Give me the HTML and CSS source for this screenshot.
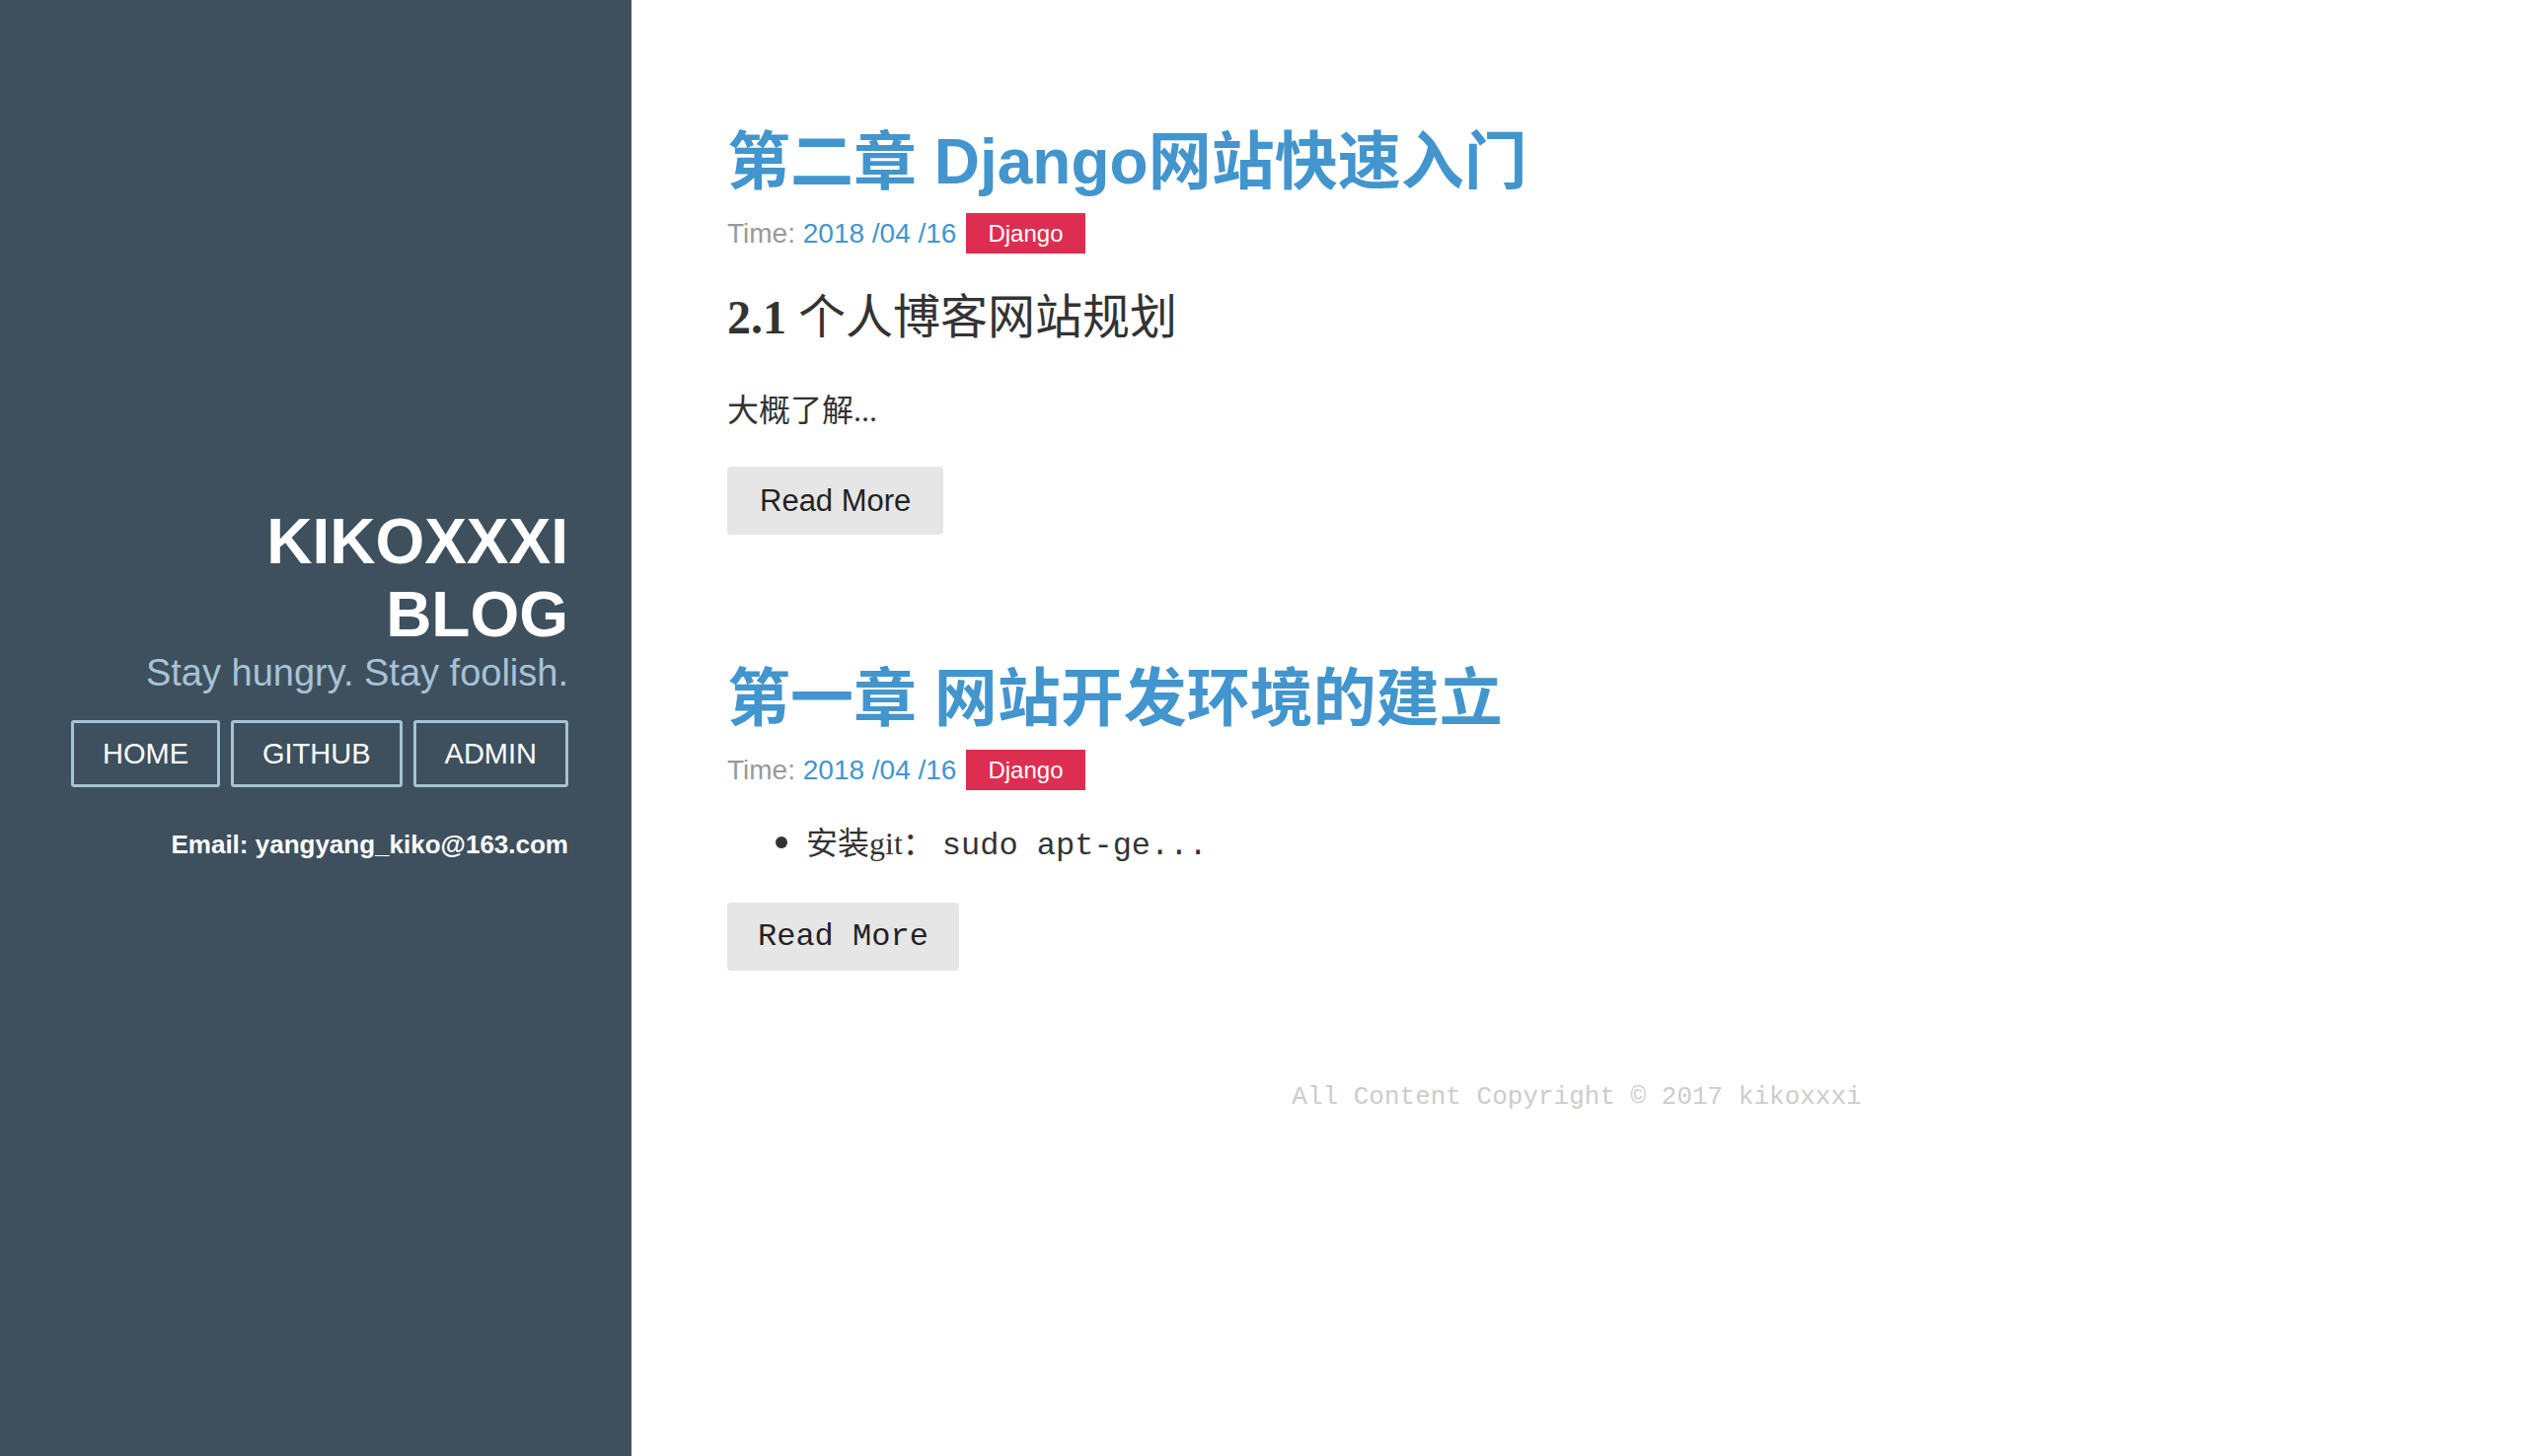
FILE: index.html
```html
<!DOCTYPE html>
<html lang="zh-CN">
<head>
<meta charset="utf-8">
<title>KIKOXXXI BLOG</title>
<link rel="stylesheet" href="styles.css">
</head>
<body>
<div class="layout">
  <aside class="sidebar">
    <h1 class="site-title">KIKOXXXI<br>BLOG</h1>
    <p class="tagline">Stay hungry. Stay foolish.</p>
    <nav class="nav">
      <a class="nav-link" href="#">HOME</a>
      <a class="nav-link" href="#">GITHUB</a>
      <a class="nav-link" href="#">ADMIN</a>
    </nav>
    <p class="email">Email: yangyang_kiko@163.com</p>
  </aside>
  <main class="main">
    <div class="posts">
      <article class="post">
        <h2 class="post-title"><a href="#">第二章 Django网站快速入门</a></h2>
        <div class="meta">
          <span class="time"><span class="time-label">Time:</span> <a class="date" href="#">2018 /04 /16</a></span>
          <a class="tag" href="#">Django</a>
        </div>
        <h3 class="excerpt-heading"><span class="num">2.1</span> 个人博客网站规划</h3>
        <p class="excerpt-text">大概了解...</p>
        <a class="read-more" href="#">Read More</a>
      </article>
      <article class="post">
        <h2 class="post-title"><a href="#">第一章 网站开发环境的建立</a></h2>
        <div class="meta">
          <span class="time"><span class="time-label">Time:</span> <a class="date" href="#">2018 /04 /16</a></span>
          <a class="tag" href="#">Django</a>
        </div>
        <ul class="excerpt-list">
          <li>安装git： <code>sudo apt-ge...</code></li>
        </ul>
        <a class="read-more read-more-mono" href="#">Read More</a>
      </article>
    </div>
    <footer class="footer">All Content Copyright © 2017 kikoxxxi</footer>
  </main>
</div>
</body>
</html>
```

FILE: styles.css
```css
html, body {
  margin: 0;
  padding: 0;
}

body {
  font-family: "Liberation Sans", "Noto Sans CJK SC", sans-serif;
  background: #ffffff;
  color: #333333;
}

.layout {
  display: flex;
  min-height: 100vh;
}

/* Sidebar */
.sidebar {
  width: 640px;
  flex-shrink: 0;
  box-sizing: border-box;
  background: #3e505e;
  padding: 512px 64px 0 60px;
  text-align: right;
  color: #ffffff;
}

.site-title {
  margin: 0;
  font-size: 64px;
  line-height: 74px;
  font-weight: 700;
}

.tagline {
  margin: 0;
  font-size: 38px;
  line-height: 44px;
  color: #a7c2d4;
}

.nav {
  display: flex;
  justify-content: flex-end;
  gap: 11px;
  margin-top: 26px;
}

.nav-link {
  display: block;
  border: 3px solid #a7c2d4;
  border-radius: 3px;
  padding: 0 29px;
  font-size: 29px;
  line-height: 62px;
  color: #ffffff;
  text-decoration: none;
}

.email {
  margin: 43px 0 0;
  font-size: 26px;
  line-height: 30px;
  font-weight: 700;
}

/* Main */
.main {
  flex: 1;
  display: flex;
  flex-direction: column;
}

.posts {
  padding: 126px 97px 0;
}

.post {
  display: flex;
  flex-direction: column;
  align-items: flex-start;
}

.post + .post {
  margin-top: 128px;
}

.post-title {
  margin: 0 0 13px;
  font-size: 64px;
  line-height: 77px;
  font-weight: 700;
}

.post-title a {
  color: #4395cd;
  text-decoration: none;
}

.meta {
  display: flex;
  align-items: center;
  height: 41px;
}

.time {
  font-size: 28px;
  line-height: 41px;
  color: #999999;
}

.date {
  color: #4395cd;
  text-decoration: none;
}

.tag {
  margin-left: 10px;
  display: block;
  background: #dd2e52;
  color: #ffffff;
  font-size: 24px;
  line-height: 41px;
  padding: 0 22px;
  text-decoration: none;
}

.excerpt-heading {
  margin: 36px 0 0;
  font-family: "Liberation Serif", "Noto Sans CJK SC", serif;
  font-size: 48px;
  line-height: 58px;
  font-weight: 400;
  color: #333333;
}

.excerpt-heading .num {
  font-weight: 700;
}

.excerpt-text {
  margin: 45px 0 0;
  font-family: "Liberation Serif", "Noto Sans CJK SC", serif;
  font-size: 32px;
  line-height: 40px;
  color: #333333;
}

.excerpt-list {
  margin: 30px 0 0;
  padding-left: 80px;
  font-family: "Liberation Serif", "Noto Sans CJK SC", serif;
  font-size: 32px;
  line-height: 44px;
  color: #333333;
}

.excerpt-list li::marker {
  font-size: 40px;
}

.excerpt-list code {
  font-family: "Liberation Mono", monospace;
  font-size: 32px;
}

.read-more {
  display: block;
  margin-top: 37px;
  padding: 0 33px;
  background: #e6e6e6;
  border-radius: 4px;
  font-size: 31px;
  line-height: 69px;
  color: #222222;
  text-decoration: none;
}

.read-more-mono {
  margin-top: 35px;
  font-family: "Liberation Mono", monospace;
  font-size: 32px;
  padding: 0 31px;
}

.footer {
  margin-top: 110px;
  text-align: center;
  font-family: "Liberation Mono", monospace;
  font-size: 26px;
  line-height: 36px;
  color: #cccccc;
}
```
